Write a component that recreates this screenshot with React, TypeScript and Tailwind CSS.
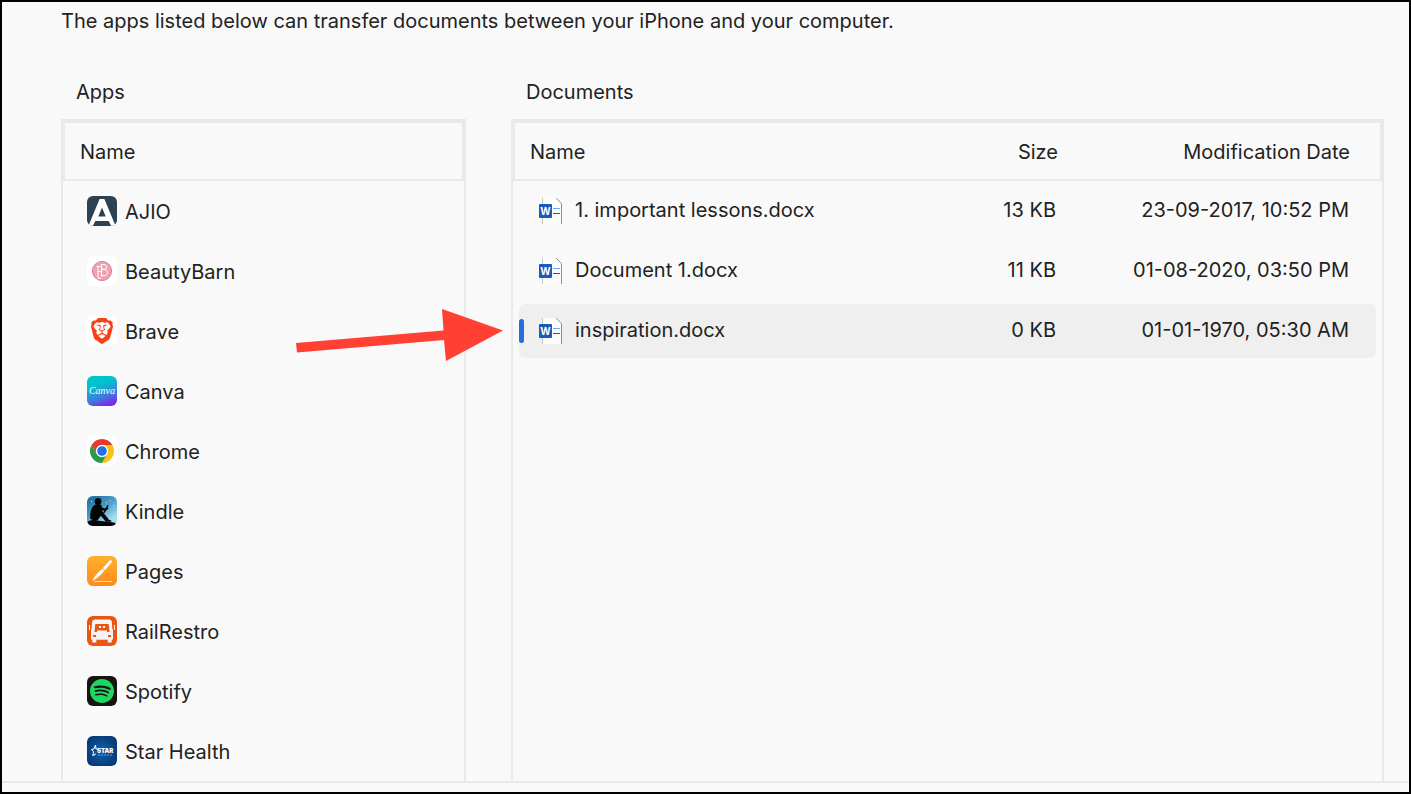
import type { ReactNode } from "react"
import { SiBrave, SiSpotify } from "react-icons/si"
import clsx from "clsx"

type AppEntry = {
  name: string
  icon: ReactNode
}

type DocumentEntry = {
  name: string
  size: string
  modified: string
  selected?: boolean
}

const documents: DocumentEntry[] = [
  { name: "1. important lessons.docx", size: "13 KB", modified: "23-09-2017, 10:52 PM" },
  { name: "Document 1.docx", size: "11 KB", modified: "01-08-2020, 03:50 PM" },
  { name: "inspiration.docx", size: "0 KB", modified: "01-01-1970, 05:30 AM", selected: true },
]

function Tile({ className, children }: { className: string; children: ReactNode }) {
  return (
    <span
      className={clsx(
        "flex size-[30px] shrink-0 items-center justify-center overflow-hidden rounded-md",
        className,
      )}
      aria-hidden="true"
    >
      {children}
    </span>
  )
}

function AjioIcon() {
  return (
    <Tile className="bg-[#2c4152]">
      <svg viewBox="0 0 30 30" className="size-[30px]">
        <path
          d="M12.6 3h4.8L28.6 30h-4.4l-2.600-5H8.400l-2.600 5H1.400zM15 11.500 11.300 20.500h7.400z"
          fill="#fff"
          fillRule="evenodd"
        />
      </svg>
    </Tile>
  )
}

function BeautyBarnIcon() {
  return (
    <Tile className="bg-white">
      <svg viewBox="0 0 30 30" className="size-[30px]" fill="none">
        <circle cx="15" cy="15" r="9.6" fill="#eba3b4" stroke="#dc7f98" />
        <path
          d="M14.5 8.2v12.4M14.5 8.5h2.6c3.6 0 3.6 5 0 5h-2.6m2.6 0c4.6 0 4.4 6.2 0 6.2h-2.6M11 10.5v11.8M9.5 10.5h3.2c3.4 0 3.4 5 0 5H11m0 6.8h3"
          stroke="#fff"
          strokeWidth="1"
        />
      </svg>
    </Tile>
  )
}

function BraveIcon() {
  return (
    <Tile className="bg-white">
      <SiBrave className="size-[26px] text-[#fb3f14]" />
    </Tile>
  )
}

function CanvaIcon() {
  return (
    <Tile className="bg-[linear-gradient(160deg,#00c4cc_30%,#3f7ae0_65%,#7d2ae8_88%)]">
      <svg viewBox="0 0 30 30" className="size-[30px]">
        <text
          x="15"
          y="18"
          textAnchor="middle"
          fill="#fff"
          fontSize="10"
          fontStyle="italic"
          fontFamily="Liberation Serif, serif"
        >
          Canva
        </text>
      </svg>
    </Tile>
  )
}

function ChromeIcon() {
  return (
    <Tile className="bg-white">
      <svg viewBox="0 0 30 30" className="size-[30px]">
        <path d="M4.6 9A12 12 0 0 1 25.4 9H15a6 6 0 0 0-5.2 9z" fill="#e33b2e" />
        <path d="M25.4 9A12 12 0 0 1 15 27l5.2-9A6 6 0 0 0 15 9z" fill="#fbc116" />
        <path d="M15 27A12 12 0 0 1 4.6 9l5.2 9a6 6 0 0 0 10.4 0z" fill="#2c9b48" />
        <circle cx="15" cy="15" r="6" fill="#fff" />
        <circle cx="15" cy="15" r="4.8" fill="#1a73e8" />
      </svg>
    </Tile>
  )
}

function KindleIcon() {
  return (
    <Tile className="bg-[linear-gradient(145deg,#1d6f9d_5%,#4a9fca_45%,#a5e0ee_80%)]">
      <svg viewBox="0 0 30 30" className="size-[30px]" fill="#050505">
        <path d="M0 26c4-2.4 8-2.400 12-1.300l15 1.800 3 1.500v2H0z" />
        <circle cx="11" cy="5.500" r="3.400" />
        <path d="M8 8.500 5.500 11C3.500 14 3 19 3.200 22.500c2 2 5 2.500 7.600 1.500l3-4.200 5 6h5.500v-1.300l-2.200-.8-7.300-9 .6-.3 3.700.2 2.500-2-1-1.200-2.600 1-2.800-.8-1.200-3z" />
        <path d="m20.500 9 1.200.6-4 7.400-1.700-.3z" />
        <path d="M23 4h1v1h-1zM19 6h1v1h-1zM26 9h1v1h-1zM4 5h1v1H4z" fill="#b9e3f2" />
      </svg>
    </Tile>
  )
}

function PagesIcon() {
  return (
    <Tile className="bg-[linear-gradient(180deg,#ffb02e,#fb8b1d)]">
      <svg viewBox="0 0 30 30" className="size-[30px]" fill="#fff">
        <path d="M24.2 4.3c.8.5.9 1.4.3 2.1l-6.600 7.800-2.200-2L22.500 4.800c.5-.6 1.100-.8 1.700-.5z" />
        <path d="m15.100 12.800 2.200 2-4.500 5c-1.500 1.500-3.600 2.700-6.900 4.900l-.4-.4c2-3.300 3.200-5.300 4.700-6.800z" />
        <path d="M7 25h18v1H7z" fill="#ffdca6" />
      </svg>
    </Tile>
  )
}

function RailRestroIcon() {
  return (
    <Tile className="bg-[#e9560f]">
      <svg viewBox="0 0 30 30" className="size-[30px]">
        <path
          d="M8 3.500h14c1.800 0 2.700 1 2.900 2.700l.4 6 .7 2v8c0 1-.4 1.600-1.300 1.600v2.700h-4v-2.700H9.300v2.700h-4v-2.700C4.400 23.800 4 23.200 4 22.200v-8l.7-2 .4-6C5.300 4.500 6.200 3.500 8 3.500z"
          fill="#f4f4f8"
        />
        <path d="M8.300 8h13.400l.8 8h-15z" fill="#e9560f" />
        <path d="M10 14.500h10V16H10zM12 10h2v2h-2zM16 10h2v2h-2z" fill="#f4f4f8" />
        <path d="M6 19h3v2H6zM21 19h3v2h-3z" fill="#e9560f" />
        <path d="M2.500 9v5M27.500 9v5" stroke="#f4f4f8" />
      </svg>
    </Tile>
  )
}

function SpotifyIcon() {
  return (
    <Tile className="bg-[#191414]">
      <SiSpotify className="size-6 text-[#1ed760]" />
    </Tile>
  )
}

function StarHealthIcon() {
  return (
    <Tile className="bg-[radial-gradient(circle_at_center,#0b63ad,#063674_85%)]">
      <svg viewBox="0 0 30 30" className="size-[30px]">
        <path
          d="M11 13H9L8.500 9 7 13l-2.500.5 2 2.300-.7 4 3.200-2"
          fill="none"
          stroke="#fff"
        />
        <text
          x="10"
          y="17"
          fill="#fff"
          fontSize="6"
          fontWeight="900"
          fontFamily="Inter, sans-serif"
        >
          STAR
        </text>
        <path d="M11 19h14" stroke="#6d9fd0" strokeDasharray="2 1" />
      </svg>
    </Tile>
  )
}

function WordFileIcon() {
  return (
    <svg viewBox="0 0 24 26" className="h-[26px] w-6 shrink-0" aria-hidden="true">
      <path d="M3 0h15l5 5v21H3z" fill="#fcfcfc" />
      <path d="M3.500 0v26" stroke="#c6c6c6" />
      <path d="M17.500 0v.5l5 5V26" fill="none" stroke="#8c8c8c" />
      <path d="M14 10.500h7" stroke="#5fb2ee" />
      <path d="M14 15.500h7" stroke="#2b579a" />
      <rect y="6" width="13" height="14" rx="1" fill="#185abd" />
      <text
        x="6.500"
        y="16.500"
        textAnchor="middle"
        fill="#fff"
        fontSize="10"
        fontWeight="700"
        fontFamily="Inter, sans-serif"
      >
        W
      </text>
    </svg>
  )
}

const apps: AppEntry[] = [
  { name: "AJIO", icon: <AjioIcon /> },
  { name: "BeautyBarn", icon: <BeautyBarnIcon /> },
  { name: "Brave", icon: <BraveIcon /> },
  { name: "Canva", icon: <CanvaIcon /> },
  { name: "Chrome", icon: <ChromeIcon /> },
  { name: "Kindle", icon: <KindleIcon /> },
  { name: "Pages", icon: <PagesIcon /> },
  { name: "RailRestro", icon: <RailRestroIcon /> },
  { name: "Spotify", icon: <SpotifyIcon /> },
  { name: "Star Health", icon: <StarHealthIcon /> },
]

function AppsPanel() {
  return (
    <section className="flex flex-col">
      <h2 id="apps-title" className="mb-[13px] pl-[15px]">
        Apps
      </h2>
      <div className="flex-1 border-2 border-b-0 border-[#e9e9e9]">
        <table
          aria-labelledby="apps-title"
          className="w-full border-separate border-spacing-0 text-left"
        >
          <thead>
            <tr className="h-[60px]">
              <th className="border-2 border-[#e9e9e9] px-[15px] pt-[2px] pb-0 font-normal">
                Name
              </th>
            </tr>
          </thead>
          <tbody>
            {apps.map((app) => (
              <tr key={app.name} className="h-[60px]">
                <td className="p-0 pl-6">
                  <div className="flex items-center gap-2">
                    {app.icon}
                    <span className="pt-[2px]">{app.name}</span>
                  </div>
                </td>
              </tr>
            ))}
          </tbody>
        </table>
      </div>
    </section>
  )
}

function DocumentRow({ doc }: { doc: DocumentEntry }) {
  const cell = clsx("flex h-[54px] items-center", doc.selected && "bg-[#efefef]")

  return (
    <tr className="h-[60px]" aria-selected={doc.selected}>
      <td className="p-0">
        <div className={clsx(cell, "ml-[6px] rounded-l-md")}>
          <span
            className={clsx("h-6 w-[5px] rounded-sm", doc.selected && "bg-[#2a6bdb]")}
          />
          <span className="ml-[15px] flex items-center gap-3">
            <WordFileIcon />
            <span className="pb-[2px]">{doc.name}</span>
          </span>
        </div>
      </td>
      <td className="p-0">
        <div className={clsx(cell, "justify-end pr-[26px] pb-[2px]")}>{doc.size}</div>
      </td>
      <td className="p-0">
        <div className={clsx(cell, "mr-[6px] justify-end rounded-r-md pr-[27px] pb-[2px]")}>
          {doc.modified}
        </div>
      </td>
    </tr>
  )
}

function DocumentsPanel() {
  return (
    <section className="flex flex-col">
      <h2 id="documents-title" className="mb-[13px] pl-[15px]">
        Documents
      </h2>
      <div className="flex-1 border-2 border-b-0 border-[#e9e9e9]">
        <table
          aria-labelledby="documents-title"
          className="w-full table-fixed border-separate border-spacing-0"
        >
          <thead>
            <tr className="h-[60px]">
              <th className="border-2 border-r-0 border-[#e9e9e9] px-[15px] pt-[2px] pb-0 text-left font-normal">
                Name
              </th>
              <th className="w-[140px] border-y-2 border-[#e9e9e9] pt-[2px] pr-6 pb-0 text-right font-normal">
                Size
              </th>
              <th className="w-[300px] border-2 border-l-0 border-[#e9e9e9] pt-[2px] pr-[30px] pb-0 text-right font-normal">
                Modification Date
              </th>
            </tr>
          </thead>
          <tbody>
            {documents.map((doc) => (
              <DocumentRow key={doc.name} doc={doc} />
            ))}
          </tbody>
        </table>
      </div>
    </section>
  )
}

export default function App() {
  return (
    <main className="relative flex min-h-screen flex-col border-2 border-black bg-[#f9f9f9] font-['Inter',sans-serif] text-[20px] leading-7 text-[#222222]">
      <p className="pt-[5px] pl-[59px]">
        The apps listed below can transfer documents between your iPhone and your computer.
      </p>
      <div className="mt-[43px] grid flex-1 grid-cols-[405px_1fr] gap-x-[45px] pr-[25px] pl-[59px]">
        <AppsPanel />
        <DocumentsPanel />
      </div>
      <div className="h-[11px] border-t-2 border-[#e9e9e9]" />

      {/* callout arrow pointing at the selected document */}
      <svg
        viewBox="0 0 208 54"
        className="pointer-events-none absolute top-[306px] left-[294px] h-[54px] w-[208px]"
        aria-hidden="true"
      >
        <path d="M0 35 147.500 22.500 146 1l61 21.500L150 53l-2-21L1 44.500z" fill="#ff4033" />
      </svg>
    </main>
  )
}
